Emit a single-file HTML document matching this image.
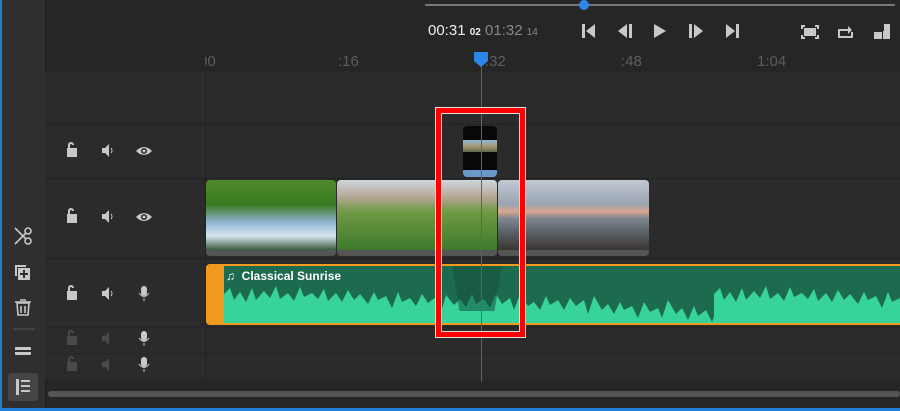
<!DOCTYPE html>
<html><head><meta charset="utf-8"><style>
*{margin:0;padding:0;box-sizing:border-box}
body{width:900px;height:411px;background:#262626;position:relative;overflow:hidden;font-family:"Liberation Sans",sans-serif}
.a{position:absolute}
.side{left:0;top:0;width:45px;height:411px;background:#2f2f2f;border-left:2px solid #1f7ed6}
.row{left:45px;width:855px}
.lbl{color:#5e5e5e;font-size:15px;top:53px}
</style></head><body>
<div class="a side"></div>
<div class="a" style="left:45px;top:0;width:2px;height:411px;background:#222"></div>
<div class="a row" style="top:72px;height:52px;background:#2b2b2b"></div>
<div class="a row" style="top:124px;height:1px;background:#222"></div>
<div class="a row" style="top:125px;height:53px;background:#2b2b2b"></div>
<div class="a row" style="top:178px;height:80px;background:#2b2b2b;border-top:1px solid #222"></div>
<div class="a row" style="top:258px;height:69px;background:#2b2b2b;border-top:1px solid #222"></div>
<div class="a row" style="top:327px;height:26px;background:#2b2b2b;border-top:1px solid #252525"></div>
<div class="a row" style="top:353px;height:26px;background:#2b2b2b;border-top:1px solid #252525"></div>
<div class="a" style="left:205px;top:72px;width:1px;height:307px;background:#232323"></div>
<div class="a" style="left:48px;top:391px;width:852px;height:6px;border-radius:3px;background:#555"></div>
<div class="a" style="left:0;top:408px;width:900px;height:3px;background:#1f7ed6"></div>
<div class="a" style="left:425px;top:4px;width:470px;height:2px;background:#777"></div>
<div class="a" style="left:579px;top:0;width:10px;height:10px;border-radius:5px;background:#2a86e8"></div>
<div class="a" style="left:428px;top:22px;color:#eee;font-size:15px">00:31 <span style="font-size:10px;font-weight:bold">02</span> <span style="color:#888">01:32 <span style="font-size:10px">14</span></span></div>
<svg class="a" style="left:575px;top:20px" width="325" height="24" fill="#c8c8c8">
<rect x="7" y="4" width="3" height="14"/><path d="M20 4v14l-9-7z"/>
<path d="M52 4v14l-9-7z"/><rect x="54" y="4" width="3" height="14"/>
<path d="M79 4v14l12-7z"/>
<rect x="114" y="4" width="3" height="14"/><path d="M119 4v14l9-7z"/>
<path d="M151 4v14l9-7z"/><rect x="161" y="4" width="3" height="14"/>
<path d="M226 5h4v2h-2v2h-2zM240 5h4v4h-2v-2h-2zM226 15h2v2h2v2h-4zM242 15h2v4h-4v-2h2z"/><rect x="229" y="8" width="12" height="8"/>
<path d="M263 9h10v-3l4 4-4 4v-3h-8v5h11v-4h2v6h-15z"/>
<path d="M299 12h8v7h-8zM309 4h6v15h-7v-8h1z"/>
</svg>
<div class="a" style="left:205px;top:53px;width:20px;height:20px;overflow:hidden"><div class="a lbl" style="left:-6px;top:0">00</div></div>
<div class="a lbl" style="left:338px">:16</div>
<div class="a lbl" style="left:485px">:32</div>
<div class="a lbl" style="left:621px">:48</div>
<div class="a lbl" style="left:757px">1:04</div>
<svg class="a" style="left:60px;top:140px" width="100" height="240" fill="#c8c8c8">
<g id="r1"><path d="M7 8h10v9H7zM8 8V5a3 3 0 0 1 6 0h-2a1 1 0 0 0-2 0v3z"/><path d="M42 8h3l4-4v13l-4-4h-3z"/><path d="M51 8q2 2.5 0 5" stroke="#c8c8c8" fill="none"/><path d="M76 11q8-8 16 0q-8 8-16 0z"/><circle cx="84" cy="11" r="3" fill="#2b2b2b"/><circle cx="84" cy="11" r="1.5"/></g>
<use href="#r1" y="66"/>
<g transform="translate(0,143)"><path d="M7 8h10v9H7zM8 8V5a3 3 0 0 1 6 0h-2a1 1 0 0 0-2 0v3z"/><path d="M42 8h3l4-4v13l-4-4h-3z"/><path d="M51 8q2 2.5 0 5" stroke="#c8c8c8" fill="none"/><rect x="81" y="3" width="6" height="10" rx="3"/><path d="M79 10q5 7 10 0M84 15v3" stroke="#c8c8c8" fill="none"/></g>
<g transform="translate(0,188)" fill="#4a4a4a"><path d="M7 8h10v9H7zM8 8V5a3 3 0 0 1 6 0h-2a1 1 0 0 0-2 0v3z"/><path d="M42 8h3l4-4v13l-4-4h-3z"/><g fill="#c8c8c8"><rect x="81" y="3" width="6" height="10" rx="3"/><path d="M79 10q5 7 10 0M84 15v3" stroke="#c8c8c8" fill="none"/></g></g>
<g transform="translate(0,214)" fill="#4a4a4a"><path d="M7 8h10v9H7zM8 8V5a3 3 0 0 1 6 0h-2a1 1 0 0 0-2 0v3z"/><path d="M42 8h3l4-4v13l-4-4h-3z"/><g fill="#c8c8c8"><rect x="81" y="3" width="6" height="10" rx="3"/><path d="M79 10q5 7 10 0M84 15v3" stroke="#c8c8c8" fill="none"/></g></g>
</svg>
<svg class="a" style="left:8px;top:225px" width="30" height="180" fill="#c8c8c8" stroke="#c8c8c8">
<g fill="none" stroke-width="1.6"><circle cx="20" cy="6" r="3"/><circle cx="20" cy="16" r="3"/><path d="M7 3l11 11M7 19l11-11"/></g>
<path stroke="none" d="M7 40h11v2H9v9H7z"/><rect x="10" y="43" width="12" height="12" stroke="none"/><path d="M16 45v8M12 49h8" stroke="#2f2f2f" stroke-width="2"/>
<path fill="none" stroke-width="1.6" d="M9 78h12l-1 12h-10zM7 77h16M12 75h6M13 81v7M17 81v7"/>
<path d="M5 104h22" stroke="#555"/>
<rect x="7" y="122" width="16" height="8" rx="1" stroke="none"/><path d="M7 126h16" stroke="#2f2f2f" stroke-width="2"/>
<rect x="0" y="148" width="30" height="28" rx="3" fill="#454545" stroke="none"/>
<path stroke="none" d="M8 154h3v16H8zM13 155h9v2h-9zM13 160h9v2h-9zM13 165h9v2h-9z"/>
</svg>
<div class="a" style="left:206px;top:180px;width:130px;height:76px;border-radius:4px;overflow:hidden;background:#555">
<div style="height:70px;background:linear-gradient(180deg,#4e8a2a 0%,#3a7a22 35%,#8fb3cf 60%,#d6e6f0 80%,#385a3a 100%)"></div></div>
<div class="a" style="left:337px;top:180px;width:160px;height:76px;border-radius:4px;overflow:hidden;background:#555">
<div style="height:70px;background:linear-gradient(180deg,#cfd6dc 0%,#b3a693 25%,#6f9a45 45%,#3f7a2c 100%)"></div></div>
<div class="a" style="left:498px;top:180px;width:151px;height:76px;border-radius:4px;overflow:hidden;background:#555">
<div style="height:70px;background:linear-gradient(180deg,#c2c9d3 0%,#9aa4b2 35%,#d8a890 45%,#7f8790 55%,#5a6066 75%,#3b3430 100%)"></div></div>
<div class="a" style="left:463px;top:126px;width:34px;height:51px;border-radius:4px;background:#080808;overflow:hidden">
<div style="margin-top:14px;height:12px;background:linear-gradient(180deg,#8fb7d8,#a89a7a,#5d6a4a)"></div>
<div style="margin-top:18px;height:7px;background:#6a98c8"></div></div>
<div class="a" style="left:206px;top:264px;width:694px;height:61px;background:#1d6b4f;border:2px solid #f29a1e;border-right:none;border-radius:4px 0 0 4px;overflow:hidden">
<div style="position:absolute;left:0;top:0;width:16px;height:61px;background:#f29a1e"></div>
<svg style="position:absolute;left:16px;top:0" width="678" height="61"><g fill="#38d39b"><path id="wv" d="M0 61V28l6-6 4 12 6-8 6 10 6-14 4 12 8-9 6 7 6-12 4 13 8-6 6 8 6-14 4 10 8-4 6 6 6-10 4 12 8-8 6 9 6-12 6 10 6-6 8 10 6-12 4 8 8-4 6 12 6-16 4 10 8-4 6 8 6-12 6 9 8-6 6 12 4-14 8 10 6-6 6 8 6-13 4 10 8-5 6 9 6-14 6 10 8-6 4 12 6-16 8 12 6-4 6 8 6-14 4 9 8-5 6 10 6-12 6 8 8-6 4 14 6-18 8 14 6-6 6 10 6-12 4 8 8-4 6 12 6-16 6 10 8-4 4 10 6-18 8 14 6-6 6 12 6-14 4 10 8-6 6 12 6-16 6 10 8-6 4 12 6-14 8 8 6-4 6 10 6-12 4 8 8-6 6 12 6-16 6 10 8-4 4 8 6-12 8 10 6-6 6 10 6-14 4 9 8-5 6 10 V61z"/><use href="#wv" x="490"/></g></svg>
<div style="position:absolute;left:18px;top:3px;color:#fff;font-size:12px;font-weight:bold">♫ &nbsp;Classical Sunrise</div>
</div>
<div class="a" style="left:452px;top:266px;width:50px;height:45px;background:rgba(20,80,60,.55);clip-path:polygon(0 0,100% 0,85% 100%,15% 100%)"></div>
<div class="a" style="left:481px;top:60px;width:1px;height:322px;background:#2a6fb8"></div>
<svg class="a" style="left:474px;top:52px" width="15" height="16"><path d="M0 0h14v9l-7 6-7-6z" fill="#2a86e8"/></svg>
<div class="a" style="left:435px;top:107px;width:91px;height:231px;border:1px solid #ddd"></div>
<div class="a" style="left:436px;top:108px;width:89px;height:229px;border:5px solid #ff0000"></div>
<div class="a" style="left:441px;top:113px;width:79px;height:219px;border:1px solid #ddd"></div>
</body></html>
